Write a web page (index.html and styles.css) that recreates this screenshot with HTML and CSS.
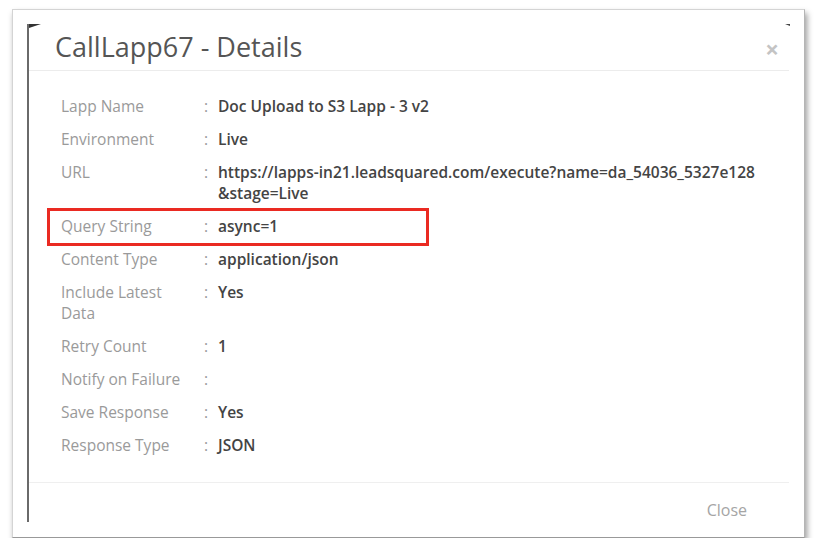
FILE: index.html
```html
<!DOCTYPE html>
<html lang="en">
  <head>
    <meta charset="UTF-8" />
    <title>CallLapp67 - Details</title>
    <link rel="stylesheet" href="styles.css">
  </head>
  <body>
    <div class="shot">
      <div class="modal">
        <div class="modal-header">
          <h3 class="modal-title">CallLapp67 - Details</h3>
          <span class="close-x">&times;</span>
        </div>
        <div class="modal-body">
          <div class="row">
            <div class="label">Lapp Name</div>
            <div class="colon">:</div>
            <div class="value">Doc Upload to S3 Lapp - 3 v2</div>
          </div>
          <div class="row">
            <div class="label">Environment</div>
            <div class="colon">:</div>
            <div class="value">Live</div>
          </div>
          <div class="row">
            <div class="label">URL</div>
            <div class="colon">:</div>
            <div class="value">https://lapps-in21.leadsquared.com/execute?name=da_54036_5327e128<br>&amp;stage=Live</div>
          </div>
          <div class="row marked">
            <div class="label">Query String</div>
            <div class="colon">:</div>
            <div class="value">async=1</div>
          </div>
          <div class="row">
            <div class="label">Content Type</div>
            <div class="colon">:</div>
            <div class="value">application/json</div>
          </div>
          <div class="row">
            <div class="label">Include Latest<br>Data</div>
            <div class="colon">:</div>
            <div class="value">Yes</div>
          </div>
          <div class="row">
            <div class="label">Retry Count</div>
            <div class="colon">:</div>
            <div class="value">1</div>
          </div>
          <div class="row">
            <div class="label">Notify on Failure</div>
            <div class="colon">:</div>
            <div class="value"></div>
          </div>
          <div class="row">
            <div class="label">Save Response</div>
            <div class="colon">:</div>
            <div class="value">Yes</div>
          </div>
          <div class="row">
            <div class="label">Response Type</div>
            <div class="colon">:</div>
            <div class="value">JSON</div>
          </div>
        </div>
        <div class="modal-footer">
          <span class="btn-close">Close</span>
        </div>
      </div>
    </div>
  </body>
</html>
```

FILE: styles.css
```css
*,
*::before,
*::after {
  margin: 0;
  padding: 0;
  box-sizing: border-box;
}
body {
  background: #fff;
  font-family: "Open Sans", "Noto Sans", sans-serif;
}
.shot {
  margin: 9px 0 0 12px;
  width: 793px;
  height: 529px;
  border: 1px solid #d4d4d4;
  border-right-color: #b5b5b5;
  border-bottom-color: #999;
  box-shadow: 2px 4px 6px rgba(0, 0, 0, 0.4);
  padding: 14px 0 0 14px;
  background: #fff;
}
.modal {
  position: relative;
  width: 762px;
  height: 498px;
  border-left: 2px solid #6a6a6a;
  display: flex;
  flex-direction: column;
}
.modal::before {
  content: "";
  position: absolute;
  left: 0;
  top: 0;
  border-top: 4px solid #333;
  border-right: 12px solid transparent;
}
.modal::after {
  content: "";
  position: absolute;
  right: -1px;
  top: 0;
  border-top: 2px solid #444;
  border-left: 5px solid transparent;
}
.modal-header {
  height: 47px;
  border-bottom: 1px solid #ececec;
  display: flex;
  align-items: center;
  justify-content: space-between;
  padding: 0 10px 0 26px;
}
.modal-title {
  font-size: 27px;
  font-weight: 400;
  color: #555;
  line-height: 46px;
}
.close-x {
  font-size: 24px;
  font-weight: 700;
  color: #c4c4c4;
  line-height: 1;
  margin-top: 4px;
}
.modal-body {
  flex: 1;
  padding: 25px 0 0 32px;
  display: flex;
  flex-direction: column;
  gap: 12px;
}
.row {
  position: relative;
  display: flex;
  font-size: 15.5px;
  line-height: 21px;
}
.label {
  width: 143px;
  color: #9a9a9a;
}
.colon {
  width: 14px;
  color: #999;
}
.value {
  color: #444;
  font-weight: 600;
}
.marked::after {
  content: "";
  position: absolute;
  left: -14px;
  top: -8px;
  width: 382px;
  height: 38px;
  border: 3px solid #ea2a22;
}
.modal-footer {
  height: 40px;
  border-top: 1px solid #efefef;
  display: flex;
  align-items: center;
  justify-content: flex-end;
  padding: 14px 42px 0 0;
}
.btn-close {
  font-size: 16px;
  color: #a5a5a5;
}
```
